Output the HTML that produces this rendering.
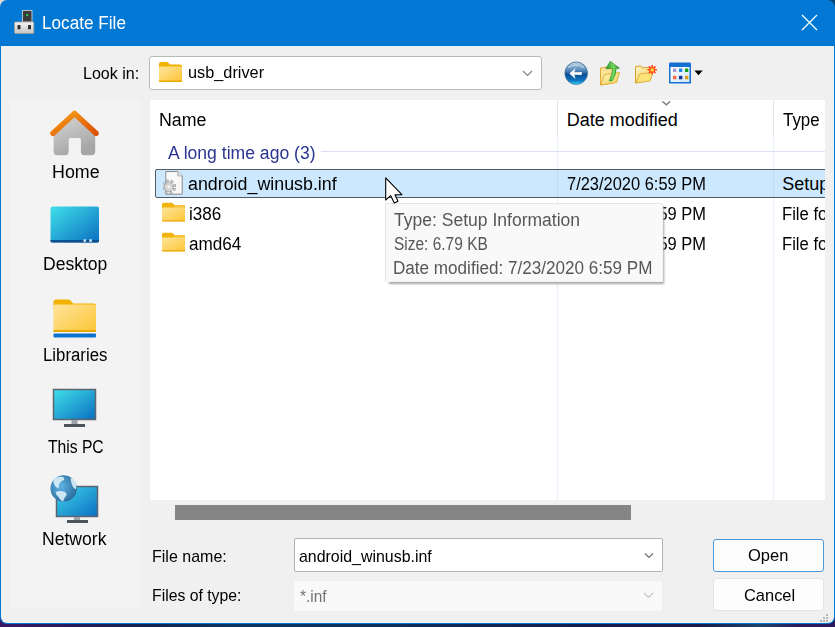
<!DOCTYPE html>
<html><head><meta charset="utf-8">
<style>
*{box-sizing:border-box;margin:0;padding:0}
html,body{width:835px;height:627px;overflow:hidden;background:#1b2a55;font-family:"Liberation Sans",sans-serif}
#bgtl{position:absolute;left:0;top:0;width:20px;height:20px;background:#dedbd6}
#bgtr{position:absolute;right:0;top:0;width:20px;height:20px;background:#0b4470}
#bgb{position:absolute;left:0;bottom:0;width:835px;height:20px;background:linear-gradient(to right,#3a1864 0,#2a1a5a 60px,#12244e 150px,#0d3560 240px,#0f2e58 400px,#161c4a 600px,#1a1a48 700px,#1f4468 760px,#2c1a5a 800px,#2c1a5a 835px)}
#win{position:absolute;left:0;top:0;width:835px;height:624px;background:#0078d4;border-radius:7px 8px 7px 7px;overflow:hidden}
#client{position:absolute;left:1px;top:46px;width:833px;height:577px;background:#f0f0f0;border-radius:0 0 6px 6px}
.t{position:absolute;white-space:pre;line-height:1}
.side{position:absolute;left:10px;top:100px;width:130px;height:507px;background:#f3f3f3}
#list{position:absolute;left:150px;top:100px;width:675px;height:400px;background:#fff;overflow:hidden}
.ab{position:absolute}
</style></head><body>
<div id="bgtl"></div><div id="bgtr"></div><div id="bgb"></div>
<div id="win">
  <svg class="ab" style="left:13px;top:9px" width="24" height="26" viewBox="0 0 24 26">
    <defs><linearGradient id="ub" x1="0" y1="0" x2="0" y2="1"><stop offset="0" stop-color="#f4f4f4"/><stop offset="1" stop-color="#c4c4c4"/></linearGradient></defs>
    <rect x="9.5" y="1.5" width="9.5" height="11.5" fill="#3a3a3a" stroke="#b9c4cf" stroke-width="1"/>
    <circle cx="14.2" cy="6.1" r="1.2" fill="#35d04a"/>
    <rect x="1.5" y="13" width="19.3" height="11.5" rx="1" fill="url(#ub)" stroke="#a89a8c" stroke-width="0.8"/>
    <rect x="4.5" y="16" width="3" height="4.2" rx="0.5" fill="#303030"/>
    <rect x="15" y="16" width="3" height="4.2" rx="0.5" fill="#303030"/>
  </svg>
  <div class="t" style="left:41.95px;top:14.36px;font-size:18px;color:#fff;transform:scaleX(0.9535);transform-origin:0 0;">Locate File</div>
  <svg class="ab" style="left:800px;top:13px" width="19" height="19" viewBox="0 0 19 19">
    <path d="M2 2 L17 17 M17 2 L2 17" stroke="#fff" stroke-width="1.3" fill="none"/>
  </svg>
  <div id="client"></div>

  <div class="t" style="left:83.26px;top:64.51px;font-size:17px;color:#000;transform:scaleX(0.9439);transform-origin:0 0;">Look in:</div>
  <div class="ab" style="left:149px;top:56px;width:393px;height:34px;background:#fff;border:1px solid #b9b9b9;border-radius:3px"></div>
  <svg class="ab" style="left:158px;top:61px" width="25" height="22" viewBox="0 0 25 22">
    <defs><linearGradient id="fg1" x1="0" y1="0" x2="1" y2="1"><stop offset="0" stop-color="#ffe49a"/><stop offset="1" stop-color="#fcc536"/></linearGradient></defs>
    <path d="M1 3 Q1 1 3 1 L9 1 Q10 1 11 2.5 L12 3.5 L22 3.5 Q24 3.5 24 5.5 L24 8 L1 8 Z" fill="#f2b200"/>
    <rect x="1" y="5.5" width="23" height="15.5" rx="1.5" fill="url(#fg1)"/>
    <rect x="1" y="19.5" width="23" height="1.5" fill="#e9a800"/>
  </svg>
  <div class="t" style="left:188.14px;top:64.31px;font-size:17px;color:#000;transform:scaleX(0.9590);transform-origin:0 0;">usb_driver</div>
  <svg class="ab" style="left:522px;top:70px" width="11" height="7" viewBox="0 0 11 7">
    <path d="M1 1 L5.5 5.5 L10 1" stroke="#858585" stroke-width="1.2" fill="none"/>
  </svg>
  <svg class="ab" style="left:563px;top:60px" width="26" height="26" viewBox="0 0 26 26">
    <defs>
      <linearGradient id="bk" x1="0" y1="0" x2="0" y2="1"><stop offset="0" stop-color="#c2d4e3"/><stop offset="0.28" stop-color="#6e9dc6"/><stop offset="0.47" stop-color="#336fa9"/><stop offset="0.53" stop-color="#0b4d93"/><stop offset="0.82" stop-color="#0f74c0"/><stop offset="1" stop-color="#30dcff"/></linearGradient>
    </defs>
    <circle cx="13.2" cy="13.2" r="11.3" fill="url(#bk)" stroke="#3d6e98" stroke-width="0.8"/>
    <path d="M5.5 7.5 Q13 2.5 20.9 7.5" stroke="#e6eef5" stroke-width="1.2" fill="none" opacity="0.7"/>
    <path d="M6.3 13.6 L12.5 8.3 L11.4 12.3 L18.8 12.1 L18.8 15 L11.4 14.8 L12.5 18.9 Z" fill="#f6f6f6"/>
  </svg>
  <svg class="ab" style="left:598px;top:59px" width="24" height="27" viewBox="0 0 24 27">
    <defs><linearGradient id="uf" x1="0" y1="0" x2="1" y2="1"><stop offset="0" stop-color="#fff6c0"/><stop offset="1" stop-color="#f0cd58"/></linearGradient>
    <linearGradient id="ua" x1="0" y1="0" x2="1" y2="0"><stop offset="0" stop-color="#1f8f22"/><stop offset="0.55" stop-color="#78dc62"/><stop offset="1" stop-color="#168a1c"/></linearGradient></defs>
    <path d="M2.5 9 L9 8 L10.5 9.5 L15 9.2 L15 24 L2.5 26 Z" fill="#f9e398" stroke="#e2aa30" stroke-width="1"/>
    <path d="M3 26 L6.5 15.5 L21.5 13.5 L18.5 23.5 Z" fill="url(#uf)" stroke="#e2aa30" stroke-width="0.9"/>
    <path d="M12.3 2.2 L21.5 9.2 L18.3 9.4 Q17.8 17 14 22 L11.2 22 Q14.5 15 14.5 9.6 L7.8 9.7 Z" fill="url(#ua)" stroke="#1a7a1e" stroke-width="0.5"/>
  </svg>
  <svg class="ab" style="left:633px;top:63px" width="26" height="23" viewBox="0 0 26 23">
    <defs><linearGradient id="nf" x1="0" y1="0" x2="1" y2="1"><stop offset="0" stop-color="#fff6c4"/><stop offset="1" stop-color="#f0cd5e"/></linearGradient></defs>
    <path d="M2.5 3.5 L8 3 L9 4.8 L17 4.5 L17.5 17 L2.5 20 Z" fill="url(#nf)" stroke="#d9a42a" stroke-width="1"/>
    <path d="M3 20 L6.3 11 L20 9.5 L17 18 Z" fill="#fbe37a" stroke="#d9a42a" stroke-width="0.8"/>
    <path d="M19.2 2 L19.2 11.4 M14.5 6.7 L23.9 6.7 M15.9 3.4 L22.5 10 M22.5 3.4 L15.9 10" stroke="#ff3a14" stroke-width="1.5"/>
    <circle cx="19.2" cy="6.7" r="3" fill="#ff5a1a"/>
    <circle cx="19.2" cy="6.9" r="1.7" fill="#ffd84a"/>
  </svg>
  <svg class="ab" style="left:668px;top:62px" width="36" height="23" viewBox="0 0 36 23">
    <defs><linearGradient id="vw" x1="0" y1="0" x2="1" y2="1"><stop offset="0" stop-color="#ffffff"/><stop offset="1" stop-color="#cfe4fb"/></linearGradient></defs>
    <rect x="1" y="0.6" width="22" height="21" rx="1.2" fill="#1470d0"/>
    <rect x="2.5" y="5" width="19" height="15" fill="url(#vw)"/>
    <rect x="5" y="6.5" width="3.3" height="3.5" rx="0.6" fill="#a29ad6"/>
    <rect x="11" y="6.5" width="3.3" height="3.5" rx="0.6" fill="#1a86e8"/>
    <rect x="17" y="6.5" width="3.3" height="3.5" rx="0.6" fill="#0ea21a"/>
    <rect x="5" y="13.8" width="3.3" height="3.5" rx="0.6" fill="#ff6a3a"/>
    <rect x="11" y="13.8" width="3.3" height="3.5" rx="0.6" fill="#0a3596"/>
    <rect x="17" y="13.8" width="3.3" height="3.5" rx="0.6" fill="#dba012"/>
    <path d="M26.4 8.6 L34.7 8.6 L30.55 13.3 Z" fill="#000"/>
  </svg>
  <div class="side">
    <svg class="ab" style="left:39px;top:9px" width="52" height="48" viewBox="0 0 52 48">
      <defs>
        <linearGradient id="hb" x1="0" y1="0" x2="0.4" y2="1"><stop offset="0" stop-color="#d9d9d9"/><stop offset="1" stop-color="#a6a6a6"/></linearGradient>
        <linearGradient id="hr" x1="0" y1="0" x2="1" y2="1"><stop offset="0" stop-color="#f7a21b"/><stop offset="1" stop-color="#de4e00"/></linearGradient>
      </defs>
      <path d="M4.6 25 L25.5 5 L46.2 25 L46.2 42.5 Q46.2 46.2 42.5 46.2 L35.5 46.2 Q31.9 46.2 31.9 42.5 L31.9 31 Q31.9 29 29.9 29 L21.7 29 Q19.7 29 19.7 31 L19.7 42.5 Q19.7 46.2 16 46.2 L8.3 46.2 Q4.6 46.2 4.6 42.5 Z" fill="url(#hb)"/>
      <path d="M4 24.3 L25.5 4.5 L47 24.3" stroke="url(#hr)" stroke-width="5.5" stroke-linecap="round" stroke-linejoin="round" fill="none"/>
    </svg>
    <div class="t" style="left:42.21px;top:63.06px;font-size:18px;color:#000;transform:scaleX(0.9913);transform-origin:0 0;">Home</div>
    <svg class="ab" style="left:40px;top:106px" width="50" height="38" viewBox="0 0 50 38">
      <defs><linearGradient id="dk" x1="0" y1="0" x2="1" y2="1"><stop offset="0" stop-color="#3fe0e8"/><stop offset="1" stop-color="#0b6ec2"/></linearGradient></defs>
      <rect x="0.5" y="0.5" width="48.5" height="36" rx="2" fill="url(#dk)"/>
      <path d="M0.5 34 L49 34 L49 35 Q49 36.5 47.5 36.5 L2 36.5 Q0.5 36.5 0.5 35 Z" fill="#0d4f8f"/>
      <rect x="33.5" y="33.3" width="2.6" height="2.6" fill="#c9e4f4"/>
      <rect x="39.3" y="33.3" width="2.6" height="2.6" fill="#c9e4f4"/>
    </svg>
    <div class="t" style="left:33.23px;top:155.16px;font-size:18px;color:#000;transform:scaleX(0.9750);transform-origin:0 0;">Desktop</div>
    <svg class="ab" style="left:42px;top:198px" width="46" height="40" viewBox="0 0 46 40">
      <defs><linearGradient id="lf" x1="0" y1="0" x2="1" y2="1"><stop offset="0" stop-color="#ffe49a"/><stop offset="1" stop-color="#fcc536"/></linearGradient></defs>
      <path d="M1.5 4 Q1.5 1.5 4 1.5 L16 1.5 Q18 1.5 19.5 3.5 L21 5.5 L42 5.5 Q44 5.5 44 7.5 L44 12 L1.5 12 Z" fill="#f2b200"/>
      <rect x="1.5" y="6.5" width="42.5" height="27.5" rx="2" fill="url(#lf)"/>
      <rect x="1.5" y="32" width="42.5" height="2" fill="#e9a800"/>
      <rect x="1.5" y="35.5" width="42.5" height="4" rx="1" fill="#0d72d0"/>
    </svg>
    <div class="t" style="left:33.27px;top:246.36px;font-size:18px;color:#000;transform:scaleX(0.9328);transform-origin:0 0;">Libraries</div>
    <svg class="ab" style="left:42px;top:288px" width="46" height="41" viewBox="0 0 46 41">
      <defs><linearGradient id="pc" x1="0" y1="0" x2="1" y2="1"><stop offset="0" stop-color="#3fe0e8"/><stop offset="1" stop-color="#0b6ec2"/></linearGradient></defs>
      <rect x="1.5" y="1.5" width="42" height="30" fill="url(#pc)" stroke="#5c6670" stroke-width="1.5"/>
      <rect x="19.5" y="32" width="6" height="4" fill="#9aa3aa"/>
      <rect x="12" y="36" width="21" height="3" fill="#4d555c"/>
    </svg>
    <div class="t" style="left:38.40px;top:337.56px;font-size:18px;color:#000;transform:scaleX(0.8698);transform-origin:0 0;">This PC</div>
    <svg class="ab" style="left:30px;top:374px" width="60" height="50" viewBox="0 0 60 50">
      <defs>
        <linearGradient id="nw" x1="0" y1="0" x2="1" y2="1"><stop offset="0" stop-color="#3fd6ea"/><stop offset="1" stop-color="#0b6ec2"/></linearGradient>
        <radialGradient id="gl" cx="0.4" cy="0.42" r="0.65"><stop offset="0" stop-color="#5fb4e4"/><stop offset="1" stop-color="#2a6a9a"/></radialGradient>
      </defs>
      <rect x="16.5" y="12.5" width="41" height="30" fill="url(#nw)" stroke="#5c6670" stroke-width="1.5"/>
      <rect x="34" y="43" width="6" height="4" fill="#9aa3aa"/>
      <rect x="27" y="46" width="21" height="3" fill="#4d555c"/>
      <circle cx="23.7" cy="14.4" r="13.2" fill="url(#gl)"/>
      <path d="M13.5 6 Q16 2.5 22 2.8 Q25 3.5 24 6 Q21 7 20 9 Q18 11 18.5 14.5 Q15 13 14 10 Q13 8 13.5 6 Z M15.5 18 Q20 16 25 18 Q27.5 20 26 22 Q24 24 23 27.5 Q20 26 18.5 23 Q16 21 15.5 18 Z M30.5 4 Q34 4 36 7 Q37 11 36 15.5 Q33 14 32 11 Q31 8 30.5 4 Z" fill="#dcf0fa" opacity="0.9"/>
    </svg>
    <div class="t" style="left:31.92px;top:429.56px;font-size:18px;color:#000;transform:scaleX(0.9769);transform-origin:0 0;">Network</div>
  </div>
  <div id="list">
    <div class="ab" style="left:407px;top:0;width:1px;height:36px;background:#e5e5e5"></div>
    <div class="ab" style="left:407px;top:36px;width:1px;height:364px;background:#e8f1fb"></div>
    <div class="ab" style="left:623px;top:0;width:1px;height:36px;background:#e5e5e5"></div>
    <div class="ab" style="left:623px;top:36px;width:1px;height:364px;background:#e8f1fb"></div>
    <svg class="ab" style="left:511px;top:0px" width="11" height="7" viewBox="0 0 11 7"><path d="M1.2 1.3 L5.4 4.8 L9.2 1.3" stroke="#7a7a7a" stroke-width="1.3" fill="none"/></svg>
    <div class="t" style="left:8.91px;top:11.06px;font-size:18px;color:#000;transform:scaleX(0.9891);transform-origin:0 0;">Name</div>
    <div class="t" style="left:416.80px;top:11.26px;font-size:18px;color:#000;">Date modified</div>
    <div class="t" style="left:633.30px;top:11.06px;font-size:18px;color:#000;transform:scaleX(0.9395);transform-origin:0 0;">Type</div>
    <div class="t" style="left:18.20px;top:43.56px;font-size:18px;color:#2a3590;transform:scaleX(0.9767);transform-origin:0 0;">A long time ago (3)</div>
    <div class="ab" style="left:171px;top:51px;width:504px;height:1px;background:#dbe1f1"></div>

    <div class="ab" style="left:5px;top:69px;width:700px;height:29px;background:#cce8ff;border:1px solid #505a64;border-radius:2px"></div>
    <div class="ab" style="left:623px;top:70px;width:1px;height:27px;background:#c2dcf5"></div>
    <div class="ab" style="left:407px;top:70px;width:1px;height:27px;background:#c2dcf5"></div>
    <svg class="ab" style="left:13px;top:71px" width="22" height="25" viewBox="0 0 22 25">
      <path d="M2.8 0.5 L14.8 0.5 L19.2 4.9 L19.2 23.2 L2.8 23.2 Z" fill="#f8f8f8" stroke="#8a8a8a" stroke-width="1"/>
      <path d="M14.8 0.5 L14.8 4.9 L19.2 4.9" fill="#e8e8e8" stroke="#9a9a9a" stroke-width="0.8"/>
      <g transform="translate(5.8,15.9) rotate(11)">
        <circle r="5.9" fill="none" stroke="#9c9c9c" stroke-width="3" stroke-dasharray="2.6 2.03"/>
        <circle r="5.9" fill="none" stroke="#d2d2d2" stroke-width="1.6" stroke-dasharray="1.6 3.03" stroke-dashoffset="-0.5"/>
        <circle r="4.6" fill="#d9d9d9" stroke="#a0a0a0" stroke-width="0.7"/>
        <circle r="2" fill="#fdfdfd" stroke="#b5b5b5" stroke-width="0.6"/>
      </g>
    </svg>
    <div class="t" style="left:38.21px;top:74.86px;font-size:18px;color:#000;transform:scaleX(0.9906);transform-origin:0 0;">android_winusb.inf</div>
    <div class="t" style="left:417.09px;top:75.26px;font-size:18px;color:#000;transform:scaleX(0.9133);transform-origin:0 0;">7/23/2020 6:59 PM</div>
    <div class="t" style="left:632.30px;top:75.26px;font-size:18px;color:#000;">Setup Information</div>

    <svg class="ab" style="left:11px;top:102px" width="26" height="21" viewBox="0 0 26 21"><path d="M1 2.5 Q1 0.8 2.7 0.8 L10.5 0.8 Q11.5 0.8 12.3 1.8 L13.5 3.1 L22.6 3.1 Q24 3.1 24 4.5 L24 10 L1 10 Z" fill="#f2b40a"/>
      <path d="M13.5 3.1 L22.6 3.1 Q24 3.1 24 4.5 L24 8 L12 8 Z" fill="#f7c43a"/>
      <rect x="1" y="5.6" width="23" height="13.8" rx="1.2" fill="url(#fg1)"/>
      <rect x="1" y="18.2" width="23" height="1.2" fill="#e9ab10"/></svg>
    <div class="t" style="left:38.55px;top:105.36px;font-size:18px;color:#000;transform:scaleX(0.9469);transform-origin:0 0;">i386</div>
    <div class="t" style="left:417.09px;top:105.16px;font-size:18px;color:#000;transform:scaleX(0.9133);transform-origin:0 0;">7/23/2020 6:59 PM</div>
    <div class="t" style="left:632.38px;top:105.16px;font-size:18px;color:#000;transform:scaleX(0.9231);transform-origin:0 0;">File folder</div>

    <svg class="ab" style="left:11px;top:132px" width="26" height="21" viewBox="0 0 26 21"><path d="M1 2.5 Q1 0.8 2.7 0.8 L10.5 0.8 Q11.5 0.8 12.3 1.8 L13.5 3.1 L22.6 3.1 Q24 3.1 24 4.5 L24 10 L1 10 Z" fill="#f2b40a"/>
      <path d="M13.5 3.1 L22.6 3.1 Q24 3.1 24 4.5 L24 8 L12 8 Z" fill="#f7c43a"/>
      <rect x="1" y="5.6" width="23" height="13.8" rx="1.2" fill="url(#fg1)"/>
      <rect x="1" y="18.2" width="23" height="1.2" fill="#e9ab10"/></svg>
    <div class="t" style="left:38.55px;top:134.96px;font-size:18px;color:#000;transform:scaleX(0.9519);transform-origin:0 0;">amd64</div>
    <div class="t" style="left:417.09px;top:135.06px;font-size:18px;color:#000;transform:scaleX(0.9133);transform-origin:0 0;">7/23/2020 6:59 PM</div>
    <div class="t" style="left:632.38px;top:135.06px;font-size:18px;color:#000;transform:scaleX(0.9231);transform-origin:0 0;">File folder</div>
  </div>

  <div class="ab" style="left:389px;top:206px;width:275px;height:78px;background:#a6a6a6;filter:blur(0.8px)"></div>
  <div class="ab" style="left:385px;top:203px;width:278px;height:79px;background:#f9f9f9;border:1px solid #e6e6e6;border-right-color:#f2f2f2;border-bottom-color:#f2f2f2"></div>
  <div class="t" style="left:394.40px;top:211.36px;font-size:18px;color:#575757;transform:scaleX(0.9737);transform-origin:0 0;">Type: Setup Information</div>
  <div class="t" style="left:393.54px;top:235.16px;font-size:18px;color:#575757;transform:scaleX(0.8598);transform-origin:0 0;">Size: 6.79 KB</div>
  <div class="t" style="left:393.45px;top:259.36px;font-size:18px;color:#575757;transform:scaleX(0.9498);transform-origin:0 0;">Date modified: 7/23/2020 6:59 PM</div>

  <svg class="ab" style="left:384px;top:176px" width="22" height="30" viewBox="0 0 22 30">
    <path d="M1.7 1.8 L1.7 24 L6.6 19.6 L10.3 27 L14 25.2 L11 18.9 L17.9 18.6 Z" fill="#fff" stroke="#000" stroke-width="1.1" stroke-linejoin="round"/>
  </svg>

  <div class="ab" style="left:175px;top:505px;width:456px;height:15px;background:#858585"></div>

  <div class="t" style="left:152.06px;top:547.61px;font-size:17px;color:#000;transform:scaleX(0.9416);transform-origin:0 0;">File name:</div>
  <div class="t" style="left:152.07px;top:587.11px;font-size:17px;color:#000;transform:scaleX(0.9277);transform-origin:0 0;">Files of type:</div>
  <div class="ab" style="left:294px;top:538px;width:369px;height:34px;background:#fff;border:1px solid #b3b3b3;border-radius:2px"></div>
  <div class="t" style="left:299.06px;top:547.61px;font-size:17px;color:#000;transform:scaleX(0.9362);transform-origin:0 0;">android_winusb.inf</div>
  <svg class="ab" style="left:644px;top:552px" width="11" height="7" viewBox="0 0 11 7"><path d="M1 1.5 L5 5.5 L9 1.5" stroke="#6d6d6d" stroke-width="1.2" fill="none"/></svg>
  <div class="ab" style="left:294px;top:581px;width:368px;height:30px;background:#f9f9f9"></div>
  <div class="t" style="left:299.80px;top:588.11px;font-size:17px;color:#747474;transform:scaleX(0.9069);transform-origin:0 0;">*.inf</div>
  <svg class="ab" style="left:643px;top:592px" width="11" height="7" viewBox="0 0 11 7"><path d="M1 1 L5.5 5.5 L10 1" stroke="#c4c4c4" stroke-width="1.2" fill="none"/></svg>

  <div class="ab" style="left:713px;top:539px;width:111px;height:33px;background:#fdfdfd;border:1px solid #4a9ae0;border-radius:3px"></div>
  <div class="t" style="left:747.53px;top:547.41px;font-size:17px;color:#000;transform:scaleX(0.9700);transform-origin:0 0;">Open</div>
  <div class="ab" style="left:713px;top:578px;width:111px;height:33px;background:#fdfdfd;border:1px solid #e3e3e3;border-radius:3px"></div>
  <div class="t" style="left:743.53px;top:587.11px;font-size:17px;color:#000;transform:scaleX(0.9667);transform-origin:0 0;">Cancel</div>

  <div class="ab" style="left:826px;top:614px;width:2px;height:2px;background:#b5b5b5"></div>
  <div class="ab" style="left:823px;top:617px;width:2px;height:2px;background:#b5b5b5"></div>
  <div class="ab" style="left:826px;top:617px;width:2px;height:2px;background:#b5b5b5"></div>
  <div class="ab" style="left:820px;top:620px;width:2px;height:2px;background:#b5b5b5"></div>
  <div class="ab" style="left:823px;top:620px;width:2px;height:2px;background:#b5b5b5"></div>
  <div class="ab" style="left:826px;top:620px;width:2px;height:2px;background:#b5b5b5"></div>
</div>
</body></html>
